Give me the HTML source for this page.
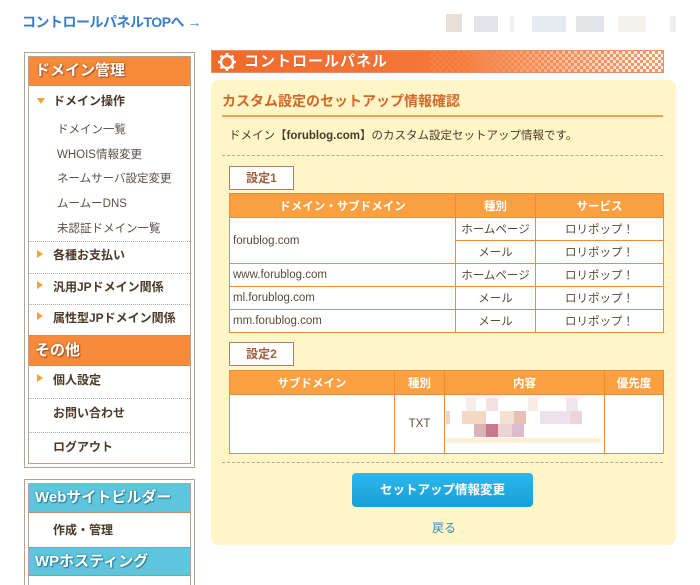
<!DOCTYPE html>
<html style="width:700px;height:585px;overflow:hidden"><head><meta charset="utf-8"><style>
*{margin:0;padding:0;box-sizing:border-box}
body{width:700px;height:585px;background:#fff;position:relative;overflow:hidden;font-family:"Liberation Sans","Noto Sans CJK JP",sans-serif;color:#4a3a2a}
.a{position:absolute}
.top{left:22px;top:12px;font-size:14px;color:#3a7dc9;font-weight:bold;letter-spacing:-0.5px}
.box{border:1px solid #b0a594;padding:3px;background:#fff}
.inner{border:1px solid #b0a594;height:100%;position:relative}
.hd{position:absolute;left:0;right:0;background:#f98a3a;color:#fff;font-weight:bold;font-size:15px;padding-left:6px;border-bottom:1px solid #c0905c;text-shadow:0 0 2px #a05020,1px 1px 1px #a05020}
.hdb{background:#5ec6dc;text-shadow:0 0 2px #2a7a94,1px 1px 1px #2a7a94}
.it{position:absolute;left:0;right:0;font-size:12px;font-weight:bold;color:#4a3a2a;padding-left:24px}
.sub{position:absolute;left:28px;font-size:11.5px;color:#5a5048}
.dl{position:absolute;left:0;right:0;border-top:1px dotted #aaa}
.tri{position:absolute;left:8px;width:0;height:0;border-top:4px solid transparent;border-bottom:4px solid transparent;border-left:6px solid #f2a23a}
.trid{position:absolute;left:8px;width:0;height:0;border-left:4px solid transparent;border-right:4px solid transparent;border-top:6px solid #f2a23a}
table{border-collapse:collapse;position:absolute;font-size:11.5px}
td,th{border:1px solid #ed8a3c;background:#fff;color:#5a4a3a;font-weight:normal}
th{background:#fba040;color:#fff;font-weight:bold;height:24px}
td{text-align:center;height:23px}
td.l{text-align:left;padding-left:3px}
.lab{position:absolute;left:229px;width:65px;height:24px;border:1px solid #b08060;background:#fff;color:#a0603a;font-size:12px;font-weight:bold;text-align:center;line-height:22px}
.dot{position:absolute;left:222px;width:441px;border-top:1px dashed #bba98a}
</style></head><body>
<div class="a top">コントロールパネルTOPへ →</div>
<div class="a" style="left:446px;top:14px;width:236px;height:20px">
<div class="a" style="left:0;top:0;width:16px;height:18px;background:#e8e0d8"></div>
<div class="a" style="left:28px;top:2px;width:24px;height:16px;background:#e2e4ea"></div>
<div class="a" style="left:64px;top:2px;width:4px;height:16px;background:#eef0f2"></div>
<div class="a" style="left:86px;top:2px;width:34px;height:16px;background:#e4ecf2"></div>
<div class="a" style="left:130px;top:2px;width:28px;height:16px;background:#e2e4e8"></div>
<div class="a" style="left:172px;top:2px;width:28px;height:16px;background:#f4f0ea"></div>
<div class="a" style="left:224px;top:2px;width:6px;height:16px;background:#eceef0"></div>
</div>

<div class="a box" style="left:24px;top:52px;width:171px;height:416px"><div class="inner">
<div class="hd" style="top:0;height:29px;line-height:28px">ドメイン管理</div>
<div class="trid" style="top:41px"></div><div class="it" style="top:35px">ドメイン操作</div>
<div class="sub" style="top:64px">ドメイン一覧</div>
<div class="sub" style="top:89px">WHOIS情報変更</div>
<div class="sub" style="top:113px">ネームサーバ設定変更</div>
<div class="sub" style="top:138px">ムームーDNS</div>
<div class="sub" style="top:163px">未認証ドメイン一覧</div>
<div class="dl" style="top:184px"></div>
<div class="tri" style="top:193px"></div><div class="it" style="top:189px">各種お支払い</div>
<div class="dl" style="top:216px"></div>
<div class="tri" style="top:224px"></div><div class="it" style="top:221px">汎用JPドメイン関係</div>
<div class="dl" style="top:247px"></div>
<div class="tri" style="top:255px"></div><div class="it" style="top:252px">属性型JPドメイン関係</div>
<div class="hd" style="top:278px;height:31px;line-height:30px;border-top:1px solid #c0905c">その他</div>
<div class="tri" style="top:317px"></div><div class="it" style="top:314px">個人設定</div>
<div class="dl" style="top:341px"></div>
<div class="it" style="top:347px">お問い合わせ</div>
<div class="dl" style="top:375px"></div>
<div class="it" style="top:381px">ログアウト</div>
</div></div>

<div class="a box" style="left:24px;top:479px;width:171px;height:120px"><div class="inner">
<div class="hd hdb" style="top:0;height:29px;line-height:28px">Webサイトビルダー</div>
<div class="it" style="top:37px">作成・管理</div>
<div class="hd hdb" style="top:63px;height:29px;line-height:28px;border-top:1px solid #c0905c">WPホスティング</div>
</div></div>

<div class="a" style="left:211px;top:50px;width:453px;height:23px;border:1px solid #e89060;background:linear-gradient(90deg,#f26a2a 0%,#f5783a 55%,#fff 100%)"></div>
<div class="a" style="left:430px;top:51px;width:233px;height:21px;background-image:linear-gradient(45deg,#f5884a 25%,transparent 25%,transparent 75%,#f5884a 75%),linear-gradient(45deg,#f5884a 25%,transparent 25%,transparent 75%,#f5884a 75%);background-size:6px 6px;background-position:0 0,3px 3px;opacity:.85"></div>
<svg class="a" style="left:217px;top:52px" width="20" height="20" viewBox="0 0 20 20"><circle cx="10" cy="10" r="6" fill="none" stroke="#fff" stroke-width="2.5"/><g stroke="#fff" stroke-width="2.5"><line x1="10" y1="1" x2="10" y2="4"/><line x1="10" y1="16" x2="10" y2="19"/><line x1="1" y1="10" x2="4" y2="10"/><line x1="16" y1="10" x2="19" y2="10"/><line x1="3.6" y1="3.6" x2="5.8" y2="5.8"/><line x1="14.2" y1="14.2" x2="16.4" y2="16.4"/><line x1="3.6" y1="16.4" x2="5.8" y2="14.2"/><line x1="14.2" y1="5.8" x2="16.4" y2="3.6"/></g></svg>
<div class="a" style="left:244px;top:52px;color:#fff;font-weight:bold;font-size:15px;letter-spacing:1px;line-height:19px;text-shadow:0 0 1px #a04010">コントロールパネル</div>

<div class="a" style="left:211px;top:80px;width:465px;height:465px;background:#fff5c6;border-radius:8px"></div>
<div class="a" style="left:222px;top:91px;font-size:14px;font-weight:bold;color:#d2672a">カスタム設定のセットアップ情報確認</div>
<div class="a" style="left:222px;top:115px;width:441px;height:2px;background:#f0a050"></div>
<div class="a" style="left:229px;top:127px;font-size:11.5px;color:#4a3a2a">ドメイン【<b>forublog.com</b>】のカスタム設定セットアップ情報です。</div>
<div class="dot" style="top:155px"></div>

<div class="lab" style="top:166px">設定1</div>
<table style="left:229px;top:193px;width:435px">
<tr><th style="width:226px">ドメイン・サブドメイン</th><th style="width:80px">種別</th><th>サービス</th></tr>
<tr><td class="l" rowspan="2">forublog.com</td><td>ホームページ</td><td>ロリポップ！</td></tr>
<tr><td>メール</td><td>ロリポップ！</td></tr>
<tr><td class="l">www.forublog.com</td><td>ホームページ</td><td>ロリポップ！</td></tr>
<tr><td class="l">ml.forublog.com</td><td>メール</td><td>ロリポップ！</td></tr>
<tr><td class="l">mm.forublog.com</td><td>メール</td><td>ロリポップ！</td></tr>
</table>

<div class="lab" style="top:342px">設定2</div>
<table style="left:229px;top:370px;width:435px">
<tr><th style="width:165px">サブドメイン</th><th style="width:50px">種別</th><th style="width:160px">内容</th><th>優先度</th></tr>
<tr><td style="height:59px"></td><td>TXT</td><td></td><td></td></tr>
</table>
<div class="a" style="left:446px;top:398px;width:155px;height:48px">
<div class="a" style="left:20px;top:0;width:10px;height:13px;background:#f6ece8"></div>
<div class="a" style="left:40px;top:0;width:12px;height:13px;background:#f2e0e2"></div>
<div class="a" style="left:82px;top:0;width:10px;height:13px;background:#f8ece6"></div>
<div class="a" style="left:120px;top:0;width:12px;height:13px;background:#f0e6ee"></div>
<div class="a" style="left:0;top:13px;width:4px;height:13px;background:#f2d6c4"></div>
<div class="a" style="left:16px;top:13px;width:24px;height:13px;background:#f4d8c4"></div>
<div class="a" style="left:54px;top:13px;width:14px;height:13px;background:#f4e0d0"></div>
<div class="a" style="left:68px;top:13px;width:12px;height:13px;background:#e6c0b2"></div>
<div class="a" style="left:94px;top:13px;width:30px;height:13px;background:#eee2ea"></div>
<div class="a" style="left:124px;top:13px;width:12px;height:13px;background:#ecd6dc"></div>
<div class="a" style="left:28px;top:26px;width:12px;height:13px;background:#d8b4b8"></div>
<div class="a" style="left:40px;top:26px;width:12px;height:13px;background:#c87890"></div>
<div class="a" style="left:52px;top:26px;width:14px;height:13px;background:#ecd4d0"></div>
<div class="a" style="left:66px;top:26px;width:12px;height:13px;background:#dcbccc"></div>
<div class="a" style="left:0;top:40px;width:155px;height:5px;background:#fcf0d6"></div>
</div>
<div class="dot" style="top:462px"></div>

<div class="a" style="left:352px;top:473px;width:181px;height:34px;border-radius:4px;background:linear-gradient(#2cb8ec,#1a9fd6);color:#fff;font-size:12.5px;font-weight:bold;text-align:center;line-height:34px">セットアップ情報変更</div>
<div class="a" style="left:432px;top:519px;font-size:12px;color:#3a8ab4">戻る</div>
</body></html>
